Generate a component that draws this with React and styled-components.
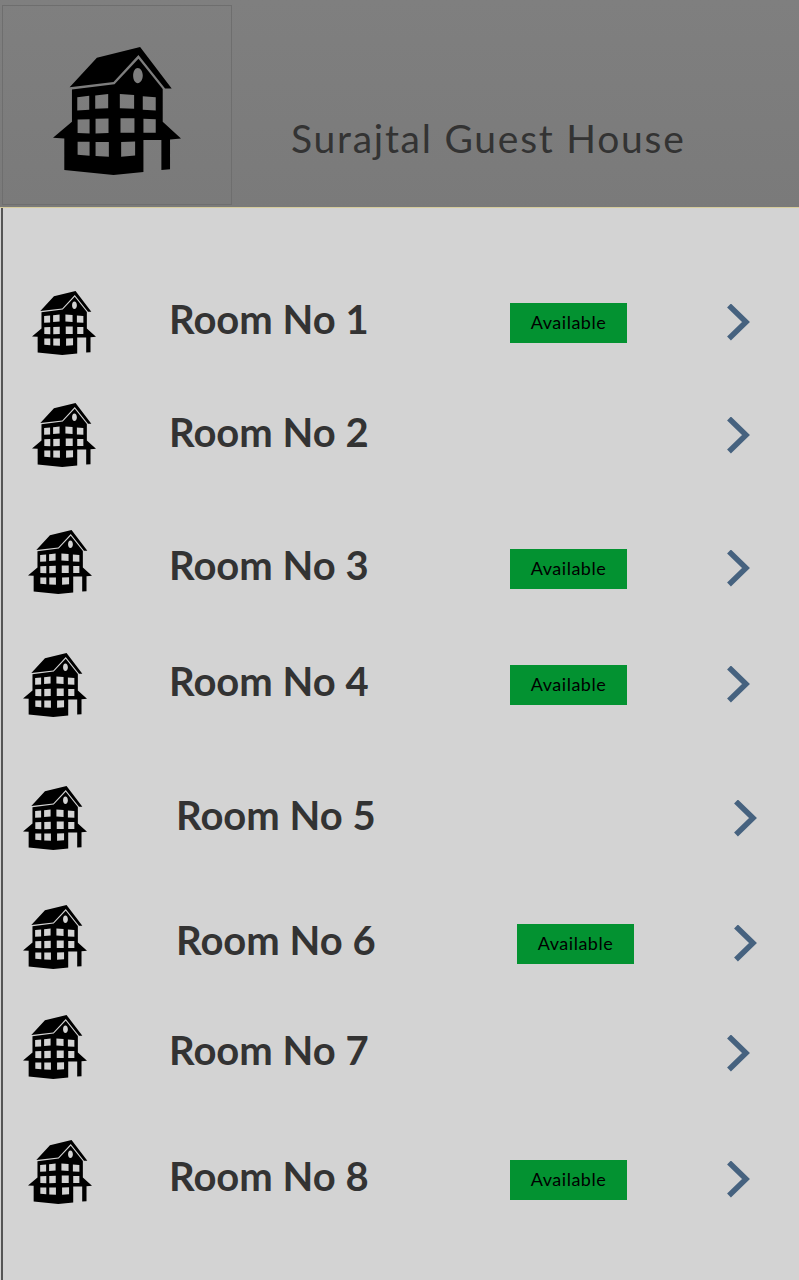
import React from 'react'
import styled, { createGlobalStyle } from 'styled-components'

const GlobalStyle = createGlobalStyle`
html, body { margin: 0; padding: 0; background: #d3d3d3; }
body { font-family: "Comic Sans MS", "Lato", sans-serif; }
`

const Page = styled.div`
width: 799px;
height: 1280px;
overflow: hidden;
display: flex;
flex-direction: column;
`
const Header = styled.header`
height: 208px;
box-sizing: border-box;
display: flex;
align-items: flex-start;
padding: 5px 0 0 2px;
background: linear-gradient(#7f7f7f, #7a7a7a);
border-bottom: 1px solid #d6cc9c;
flex-shrink: 0;
`
const LogoBox = styled.div`
width: 230px;
height: 200px;
box-sizing: border-box;
padding-top: 12px;
border: 1px solid #6e6e6e;
display: flex;
align-items: center;
justify-content: center;
`
const Title = styled.h1`
margin: 110px 0 0 59px;
font-size: 39px;
line-height: 46px;
font-weight: 400;
letter-spacing: 1.75px;
color: #333;
white-space: nowrap;
`
const List = styled.main`
flex: 1;
border-left: 2px solid #555;
margin-left: 1px;
background: #d3d3d3;
`
const Row = styled.div`
height: 64px;
margin-top: ${p => p.$gap}px;
display: flex;
align-items: center;
`
const IconCell = styled.div`
width: 166px;
padding-left: ${p => p.$indent}px;
padding-bottom: ${p => (p.$lift || 0) * 2}px;
box-sizing: border-box;
display: flex;
align-items: center;
`
const RowBody = styled.div`
flex: 1;
display: flex;
align-items: center;
padding-left: ${p => p.$shift || 0}px;
`
const RoomName = styled.div`
width: 341px;
padding-bottom: 9px;
font-size: 40px;
line-height: 48px;
font-weight: 700;
color: #333;
white-space: nowrap;
`
const BadgeSlot = styled.div`
width: 217px;
`
const Badge = styled.div`
width: 117px;
height: 40px;
box-sizing: border-box;
padding-bottom: 3px;
display: flex;
align-items: center;
justify-content: center;
background: #039231;
color: #000;
font-size: 18px;
letter-spacing: .5px;
`
const Chevron = styled.svg`
display: block;
width: 24px;
height: 38px;
`

const House = ({ size }) => (
  <svg width={size} height={size} viewBox="158 140 385 385">
    <path fill="#000" d="M208 261 L290 172 L420 140 L515 265 L495 265 L415 164 L340 245 Z" />
    <path
      fill="#000"
      fillRule="evenodd"
      d="M215 268 L343 252 L415 175 L488 266 L488 365 L543 415 L510 418 L510 508 L484 510 L484 420 L430 420 L430 516 L340 525 L192 510 L192 415 L158 413 L215 365 Z
      M413 203 C421 203 428 213 428 226 C428 239 421 249 413 249 C405 249 399 239 399 226 C399 213 405 203 413 203 Z
      M231 291 L267 287 L267 329 L231 331 Z
      M285 286 L324 281 L324 324 L285 326 Z
      M359 281 L402 284 L402 326 L359 324 Z
      M428 288 L467 291 L467 331 L428 329 Z
      M232 358 L268 357 L268 400 L232 399 Z
      M286 356 L325 355 L325 399 L286 400 Z
      M361 354 L403 354 L403 398 L361 398 Z
      M430 356 L467 357 L467 398 L430 398 Z
      M232 425 L268 425 L268 467 L232 464 Z
      M286 426 L326 426 L326 470 L286 468 Z
      M363 426 L405 424 L405 466 L363 470 Z"
    />
  </svg>
)

const rooms = [
  { no: 1, gap: 83, indent: 29, available: true },
  { no: 2, gap: 49, indent: 29, lift: 1 },
  { no: 3, gap: 69, indent: 25, lift: 7, available: true },
  { no: 4, gap: 52, indent: 20, available: true },
  { no: 5, gap: 70, indent: 20, lift: 1, shift: 7 },
  { no: 6, gap: 61, indent: 20, lift: 7, shift: 7, available: true },
  { no: 7, gap: 46, indent: 20, lift: 7 },
  { no: 8, gap: 62, indent: 25, lift: 8, available: true },
]

const App = () => (
  <Page>
    <GlobalStyle />
    <Header>
      <LogoBox>
        <House size={128} />
      </LogoBox>
      <Title>Surajtal Guest House</Title>
    </Header>
    <List>
      {rooms.map(r => (
        <Row key={r.no} $gap={r.gap}>
          <IconCell $indent={r.indent} $lift={r.lift}>
            <House size={64} />
          </IconCell>
          <RowBody $shift={r.shift}>
            <RoomName>Room No {r.no}</RoomName>
            <BadgeSlot>{r.available && <Badge>Available</Badge>}</BadgeSlot>
            <Chevron viewBox="0 0 24 38">
              <path d="M2 1.5 L19 18 L2 34.5" fill="none" stroke="#46627f" strokeWidth="5.5" />
            </Chevron>
          </RowBody>
        </Row>
      ))}
    </List>
  </Page>
)

export default App
